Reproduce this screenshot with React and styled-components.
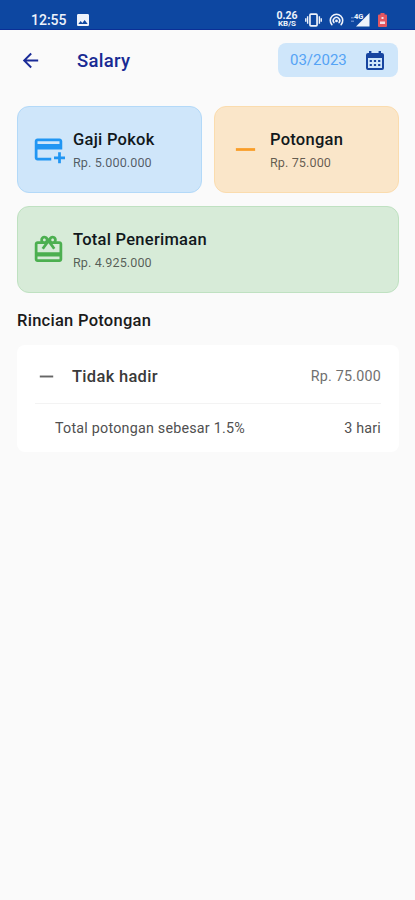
import React from "react";
import styled, { createGlobalStyle } from "styled-components";
import { MdAddCard, MdCardGiftcard, MdRemove, MdArrowBack, MdImage } from "react-icons/md";

const GlobalStyle = createGlobalStyle`
  * { box-sizing: border-box; }
  body { margin: 0; background: #fafafa; font-family: Roboto, "Noto Sans", sans-serif; }
`;

const Screen = styled.div`
  width: 100%;
  min-height: 900px;
  background: #fafafa;
  overflow: hidden;
`;

const StatusBar = styled.div`
  height: 30px;
  padding: 9px 28px 0 31px;
  display: flex;
  justify-content: space-between;
  background: #0d47a1;
  border-bottom: 1px solid #0b2f96;
  color: #eef3fb;
`;

const StatusGroup = styled.div`
  display: flex;
  align-items: center;
  height: 21px;
  gap: ${(p) => p.$gap}px;
  svg { display: block; flex: none; }
`;

const Clock = styled.span`
  font-size: 14px;
  font-weight: 500;
`;

const NetSpeed = styled.div`
  width: 22px;
  display: flex;
  flex-direction: column;
  align-items: center;
  font-weight: 700;
  font-size: 10.5px;
  line-height: 8px;
`;

const NetUnit = styled.span`
  font-size: 8px;
  line-height: 7px;
`;

const Header = styled.header`
  height: 60px;
  padding: 0 17px 0 19px;
  display: flex;
  align-items: center;
  color: #1a2b97;
`;

const Title = styled.h1`
  margin: 0 auto 0 35px;
  padding-top: 1px;
  font-size: 18.5px;
  font-weight: 500;
  line-height: 24px;
  letter-spacing: 0.3px;
  color: #182a93;
`;

const MonthButton = styled.button`
  width: 120px;
  height: 34px;
  padding: 0 14px 0 12px;
  border: 0;
  border-radius: 8px;
  display: flex;
  align-items: center;
  justify-content: space-between;
  background: #cfe6fa;
  color: #55a3f5;
  font: 400 15px Roboto, sans-serif;
  svg { display: block; }
`;

const Content = styled.main`
  padding: 16px 16px 0 17px;
`;

const Cards = styled.div`
  display: grid;
  grid-template-columns: 1fr 1fr;
  gap: 13px 12px;
`;

const tones = {
  blue: ["#cfe6fa", "#b3d9f8", "#2196f3"],
  orange: ["#fae6c9", "#fadcae", "#f99d27"],
  green: ["#d7ebd8", "#bfe1c1", "#4caf50"],
};

const Card = styled.section`
  height: 87px;
  grid-column: ${(p) => (p.$wide ? "1 / -1" : "auto")};
  padding-left: 13px;
  display: flex;
  align-items: center;
  border: 1px solid ${(p) => tones[p.$tone][1]};
  border-radius: 12px;
  background: ${(p) => tones[p.$tone][0]};
`;

const CardIcon = styled.div`
  width: 34px;
  height: 34px;
  margin-right: 8px;
  display: flex;
  color: ${(p) => tones[p.$tone][2]};
  svg { display: block; margin: auto; }
`;

const CardText = styled.div`
  padding-top: 3px;
`;

const CardTitle = styled.h2`
  margin: 0 0 2px;
  font-size: 16.5px;
  line-height: 22px;
  font-weight: 500;
  letter-spacing: 0.26px;
  color: #11181c;
`;

const CardAmount = styled.p`
  margin: 0;
  font-size: 12.6px;
  line-height: 20px;
  letter-spacing: 0.1px;
  color: rgba(0, 0, 0, 0.62);
`;

const SectionTitle = styled.h2`
  margin: 17px 0 13px;
  font-size: 16.5px;
  line-height: 22px;
  font-weight: 500;
  letter-spacing: 0.27px;
  color: #1b1b1b;
`;

const Details = styled.section`
  height: 107px;
  padding: 0 18px;
  border-radius: 8px;
  background: #fff;
`;

const DetailHead = styled.div`
  height: 59px;
  padding-top: 4px;
  display: flex;
  align-items: center;
  border-bottom: 1px solid #f3f3f3;
  color: #666;
  svg { display: block; }
`;

const DetailName = styled.span`
  margin: 0 auto 0 14px;
  font-size: 16.5px;
  font-weight: 500;
  letter-spacing: 0.3px;
  color: #3a3a3a;
`;

const DetailValue = styled.span`
  font-size: 14.3px;
  letter-spacing: 0.22px;
  color: ${(p) => (p.$strong ? "#505050" : "#707070")};
`;

const DetailRow = styled.div`
  height: 47px;
  padding-left: 20px;
  display: flex;
  align-items: center;
  justify-content: space-between;
`;

const CalendarIcon = () => (
  <svg width="18" height="19" viewBox="0 0 18 19">
    <path fill="#1745a0" d="M3 0h2.400v2h7.200V0H15v2h1a2 2 0 0 1 2 2v13a2 2 0 0 1-2 2H2a2 2 0 0 1-2-2V4a2 2 0 0 1 2-2h1z" />
    <path fill="#cfe6fa" d="M2 7h14v10H2z" />
    <path fill="#1745a0" d="M3.700 9h2.200v2H3.700zm4.200 0h2.200v2H7.900zm4.200 0h2.200v2h-2.200zm-8.400 4h2.200v2H3.700zm4.200 0h2.200v2H7.900zm4.200 0h2.200v2h-2.200z" />
  </svg>
);

const VibrateIcon = () => (
  <svg width="17" height="14" viewBox="0 0 18 15" fill="none" stroke="#eef3fb" strokeWidth="1.500">
    <rect x="5.200" y="1.200" width="7.600" height="12.600" rx="1" strokeWidth="1.800" />
    <path d="M2.700 3.500v8M15.300 3.500v8M.7 5.500v4M17.300 5.500v4" />
  </svg>
);

const HotspotIcon = () => (
  <svg width="15" height="13" viewBox="0 0 16 14" fill="none" stroke="#eef3fb" strokeWidth="1.700" strokeLinecap="round">
    <path d="M3 12.500a6.700 6.700 0 1 1 10 0M5.200 10.300a3.500 3.500 0 1 1 5.600 0" />
    <circle cx="8" cy="8.500" r="1.500" fill="#eef3fb" stroke="none" />
  </svg>
);

const SignalIcon = () => (
  <svg width="20" height="15" viewBox="0 0 20 15">
    <path fill="#eef3fb" d="M18.500 1v13.500H5z" />
    <path fill="#5f86c8" d="M0 5h3v1.500H0zm0 3.500h3V10H0z" />
    <text x="3" y="7" fontSize="7.500" fontWeight="700" fontFamily="Roboto" fill="#eef3fb" stroke="#0d47a1" strokeWidth="1.200" paintOrder="stroke">4G</text>
  </svg>
);

const BatteryIcon = () => (
  <svg width="9" height="14" viewBox="0 0 9 14">
    <path fill="#e35761" d="M2.500 0h4v1.500H8a1 1 0 0 1 1 1V13a1 1 0 0 1-1 1H1a1 1 0 0 1-1-1V2.500a1 1 0 0 1 1-1h1.500z" />
    <path fill="#f5dfe8" d="M2 8.500h5V11H2zM3.500 4h2v2h-2z" />
  </svg>
);

function SummaryCard({ tone, title, amount, icon, wide }) {
  return (
    <Card $tone={tone} $wide={wide}>
      <CardIcon $tone={tone}>{icon}</CardIcon>
      <CardText>
        <CardTitle>{title}</CardTitle>
        <CardAmount>{amount}</CardAmount>
      </CardText>
    </Card>
  );
}

export default function App() {
  return (
    <>
      <GlobalStyle />
      <Screen>
        <StatusBar>
          <StatusGroup $gap={8}>
            <Clock>12:55</Clock>
            <MdImage size={16} />
          </StatusGroup>
          <StatusGroup $gap={7}>
            <NetSpeed>
              <span>0.26</span>
              <NetUnit>KB/S</NetUnit>
            </NetSpeed>
            <VibrateIcon />
            <HotspotIcon />
            <SignalIcon />
            <BatteryIcon />
          </StatusGroup>
        </StatusBar>
        <Header>
          <MdArrowBack size={23} />
          <Title>Salary</Title>
          <MonthButton>
            03/2023
            <CalendarIcon />
          </MonthButton>
        </Header>
        <Content>
          <Cards>
            <SummaryCard tone="blue" title="Gaji Pokok" amount="Rp. 5.000.000" icon={<MdAddCard size={33} />} />
            <SummaryCard tone="orange" title="Potongan" amount="Rp. 75.000" icon={<MdRemove size={33} />} />
            <SummaryCard tone="green" title="Total Penerimaan" amount="Rp. 4.925.000" icon={<MdCardGiftcard size={33} />} wide />
          </Cards>
          <SectionTitle>Rincian Potongan</SectionTitle>
          <Details>
            <DetailHead>
              <MdRemove size={23} />
              <DetailName>Tidak hadir</DetailName>
              <DetailValue>Rp. 75.000</DetailValue>
            </DetailHead>
            <DetailRow>
              <DetailValue $strong>Total potongan sebesar 1.5%</DetailValue>
              <DetailValue $strong>3 hari</DetailValue>
            </DetailRow>
          </Details>
        </Content>
      </Screen>
    </>
  );
}
